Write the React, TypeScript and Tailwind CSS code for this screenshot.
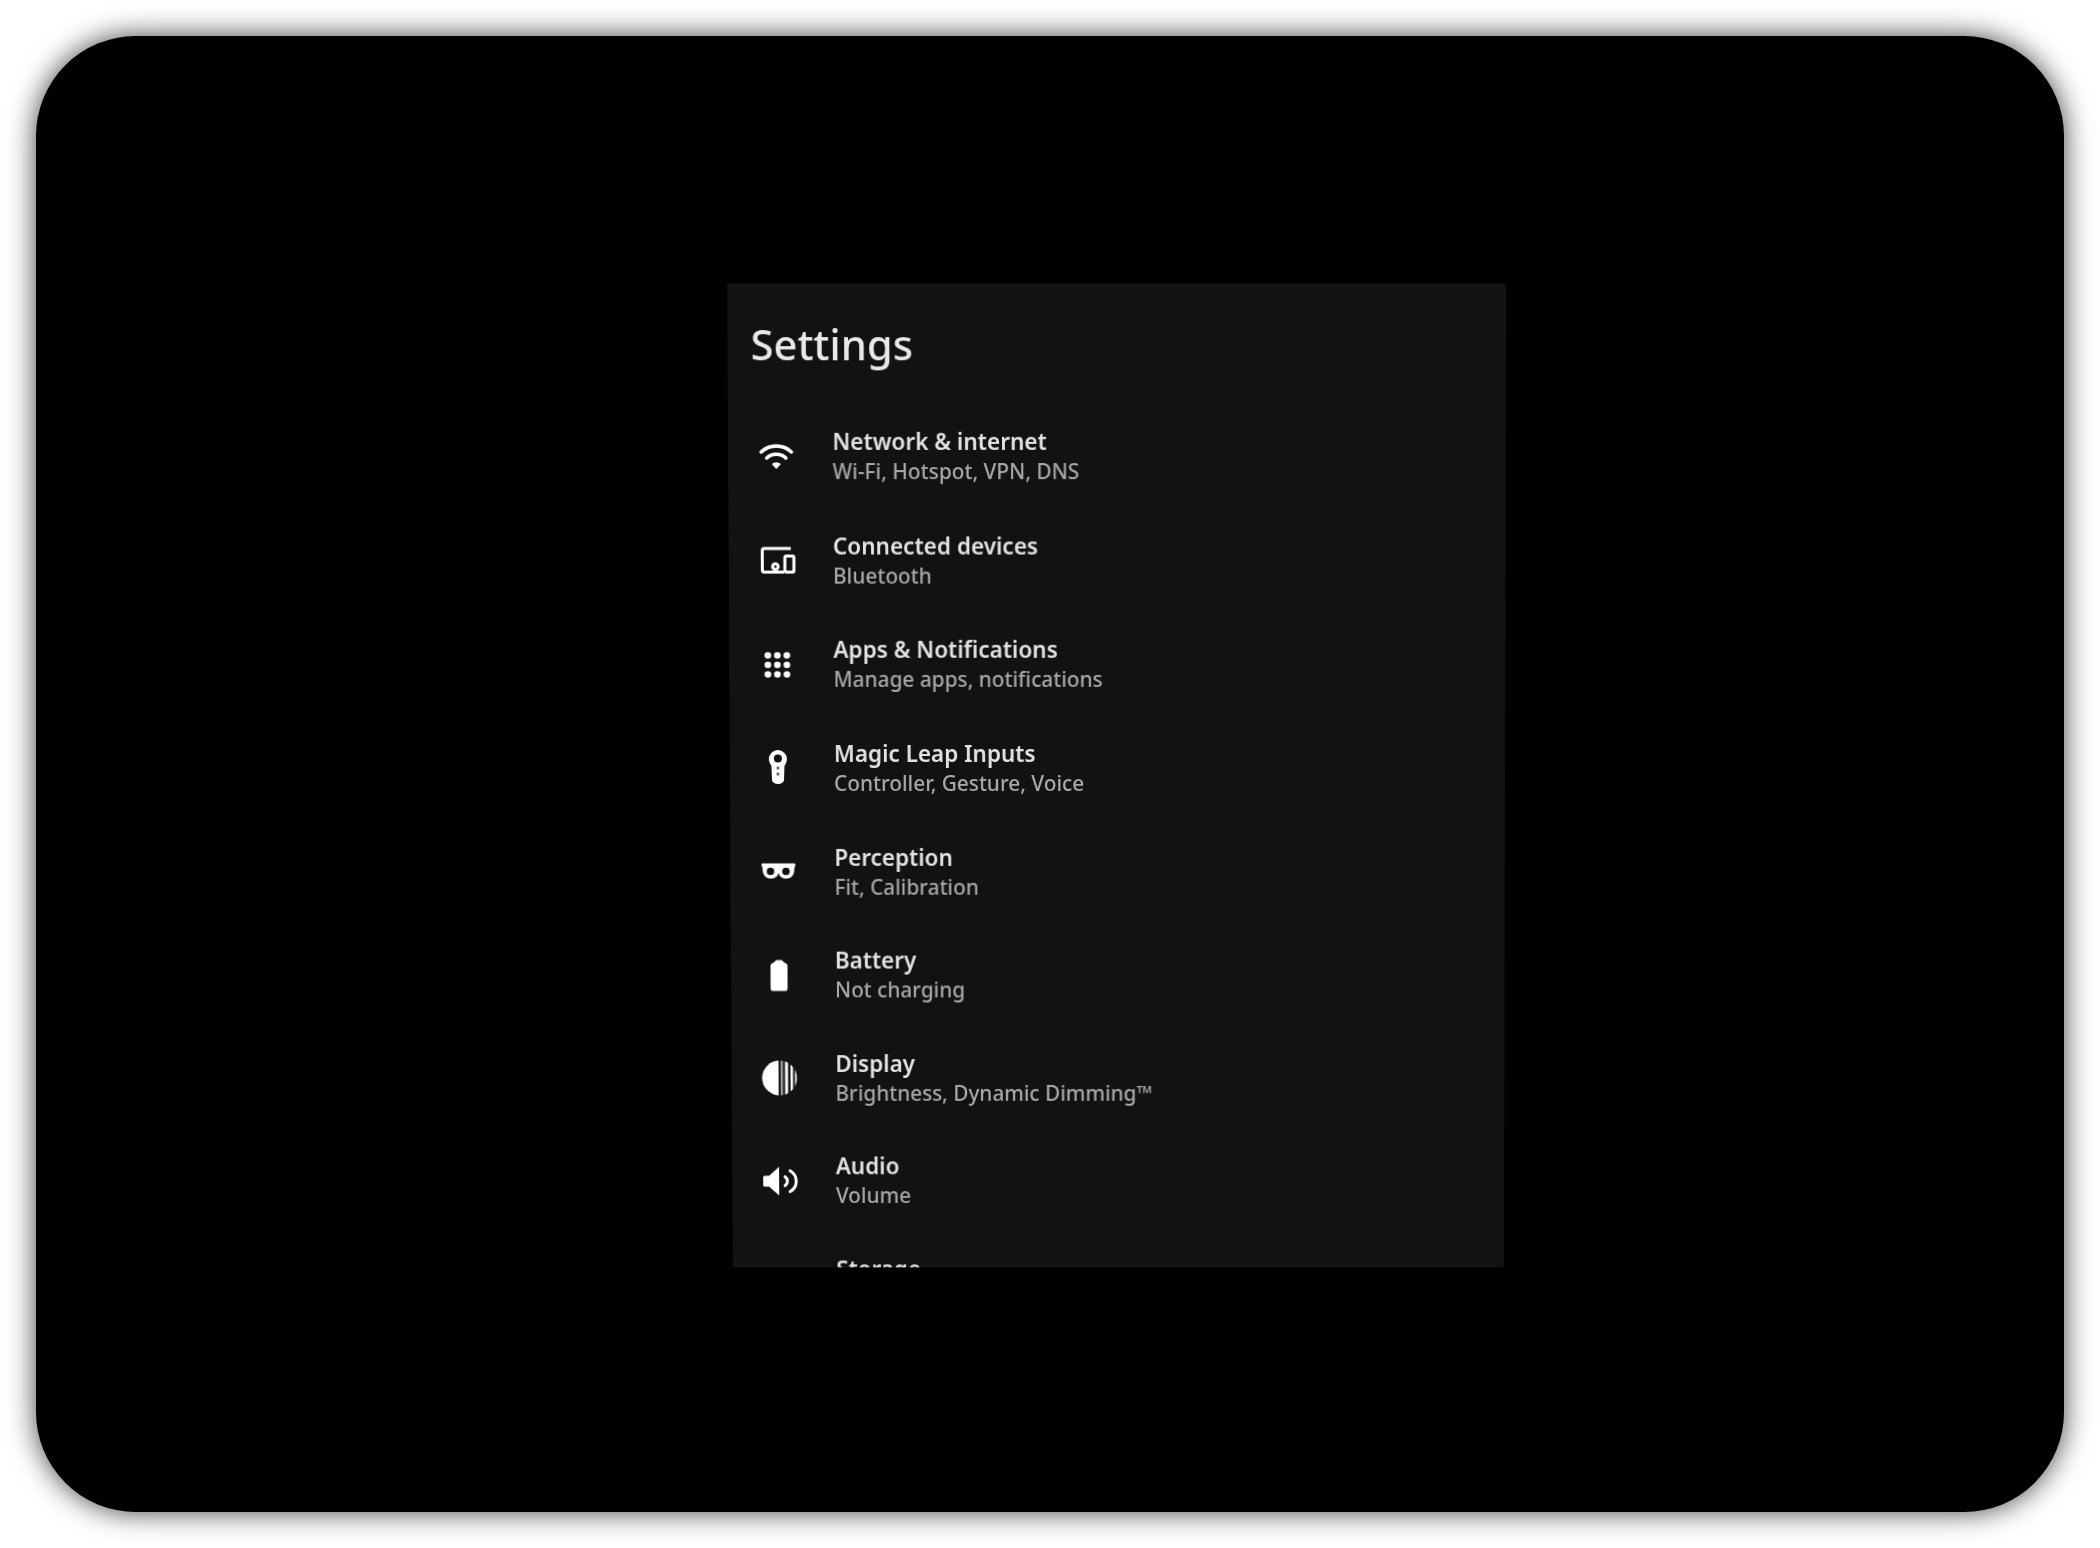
import type { ReactNode } from "react";

const PANEL = "#121212";

function Icon({ children }: { children: ReactNode }) {
  return (
    <svg viewBox="0 0 40 40" className="h-10 w-10 shrink-0" fill="#fff" stroke="none">
      {children}
    </svg>
  );
}

const WifiIcon = () => (
  <Icon>
    <g fill="none" stroke="#fff" strokeWidth="3.600" strokeLinecap="round">
      <path d="M5 15A22 22 0 0 1 35 15" />
      <path d="M10.5 21A14 14 0 0 1 29.500 21" />
    </g>
    <path d="M15.500 27A6.500 6.500 0 0 1 24.500 27L20 32Z" />
  </Icon>
);

const DevicesIcon = () => (
  <Icon>
    <g fill="none" stroke="#fff" strokeWidth="3">
      <path d="M34 8H7.500Q5.500 8 5.500 10V29.500Q5.500 31.500 7.500 31.500H27" />
      <rect x="28" y="15.500" width="9" height="16" rx="1.500" />
      <circle cx="18.500" cy="26" r="2.800" />
    </g>
  </Icon>
);

const AppsIcon = () => (
  <Icon>
    {[10.500, 20, 29.500].map((cy) =>
      [10.500, 20, 29.500].map((cx) => <circle key={`${cx}-${cy}`} cx={cx} cy={cy} r="3.300" />)
    )}
  </Icon>
);

const ControllerIcon = () => (
  <Icon>
    <path d="M11 10A9 9 0 0 1 29 10C29 13 27.500 15 26.500 17L26 31A6 4 0 0 1 14 31L13.500 17C12.500 15 11 13 11 10Z" />
    <circle cx="20" cy="9.500" r="4" fill={PANEL} />
    <circle cx="20" cy="19" r="1.700" fill="#777" />
    <circle cx="20" cy="25" r="1.700" fill="#777" />
  </Icon>
);

const GlassesIcon = () => (
  <Icon>
    <path d="M3 12.500Q3 11.500 4 11.500H36Q37 11.500 37 12.500Q36 15 35.500 20.500A8 8 0 0 1 20 21A8 8 0 0 1 4.500 20.500Q4 15 3 12.500Z" />
    <circle cx="12" cy="19.500" r="3.800" fill={PANEL} />
    <circle cx="27.500" cy="19.500" r="3.800" fill={PANEL} />
  </Icon>
);

const BatteryIcon = () => (
  <Icon>
    <path d="M16 6Q16 4.500 17.500 4.500H22.500Q24 4.500 24 6L28 8.500Q28.500 9 28.500 10V33Q28.500 35.500 26.500 35.500H13.500Q11.500 35.500 11.500 33V10Q11.500 9 12 8.500Z" />
  </Icon>
);

const DisplayIcon = () => (
  <Icon>
    <clipPath id="display-disc">
      <circle cx="20" cy="20" r="17.500" />
    </clipPath>
    <g clipPath="url(#display-disc)">
      <rect x="2" y="2" width="17" height="36" />
      <rect x="21" y="2" width="2.500" height="36" fill="#999" />
      <rect x="25.500" y="2" width="3" height="36" />
      <rect x="31" y="2" width="2.500" height="36" />
      <rect x="35.500" y="2" width="2" height="36" />
    </g>
  </Icon>
);

const AudioIcon = () => (
  <Icon>
    <path d="M3 16Q3 14.500 4.500 14.500H9L19 5.500V34.500L9 25.500H4.500Q3 25.500 3 24Z" />
    <g fill="none" stroke="#fff" strokeWidth="3" strokeLinecap="round">
      <path d="M25 15.500A5.500 5.500 0 0 1 25 24.500" />
      <path d="M30 9.500A12 12 0 0 1 30 30.500" />
    </g>
  </Icon>
);

const rows = [
  { icon: <WifiIcon />, title: "Network & internet", sub: "Wi-Fi, Hotspot, VPN, DNS" },
  { icon: <DevicesIcon />, title: "Connected devices", sub: "Bluetooth" },
  { icon: <AppsIcon />, title: "Apps & Notifications", sub: "Manage apps, notifications" },
  { icon: <ControllerIcon />, title: "Magic Leap Inputs", sub: "Controller, Gesture, Voice" },
  { icon: <GlassesIcon />, title: "Perception", sub: "Fit, Calibration" },
  { icon: <BatteryIcon />, title: "Battery", sub: "Not charging" },
  { icon: <DisplayIcon />, title: "Display", sub: "Brightness, Dynamic Dimming™" },
  { icon: <AudioIcon />, title: "Audio", sub: "Volume" },
  { icon: null, title: "Storage", sub: "\u00a0" },
];

export default function App() {
  return (
    <div className="h-[1548px] w-[2100px] overflow-hidden bg-white p-9 font-['Noto_Sans',sans-serif]">
      <div className="h-[1476px] w-[2028px] rounded-[100px] bg-black pl-[694px] pt-[250px] shadow-[0_0_28px_rgba(0,0,0,0.75)]">
        <div className="h-[984px] w-[775px] overflow-hidden bg-[#121212] blur-[0.7px] [transform:perspective(2000px)_rotateX(-1.2deg)_skewX(0.1deg)]">
          <div className="flex h-[120px] items-center pl-[23px] text-[41.500px] font-medium text-[#e8e8e8]">Settings</div>
          {rows.map((row) => (
            <div key={row.title} className="flex h-[103.600px] items-center gap-9 pl-7">
              <div className="flex h-10 w-10 shrink-0 items-center justify-center">{row.icon}</div>
              <div className="flex flex-col">
                <div className="text-[22.500px] leading-[30px] font-semibold text-[#e2e2e2]">{row.title}</div>
                <div className="text-[20.800px] leading-[29px] font-medium text-[#a8a8a8]">{row.sub}</div>
              </div>
            </div>
          ))}
        </div>
      </div>
    </div>
  );
}
